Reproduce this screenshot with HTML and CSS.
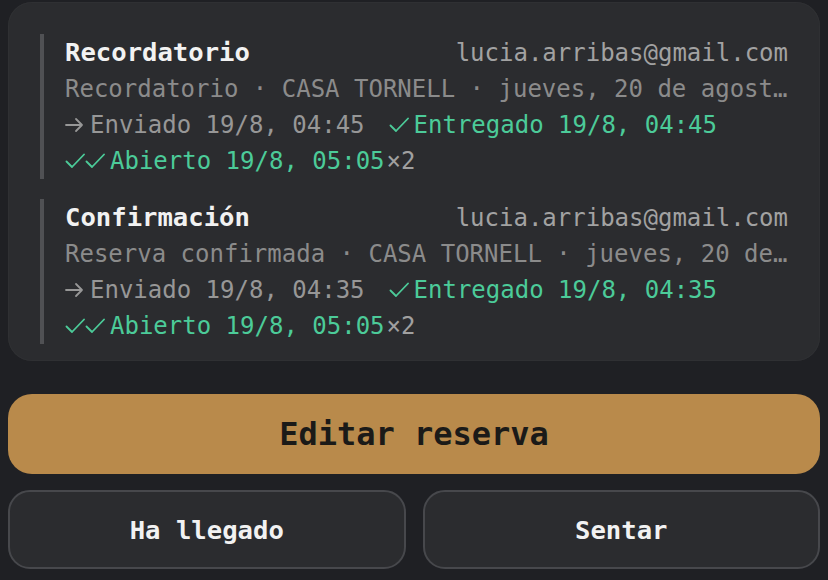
FILE: index.html
```html
<!DOCTYPE html>
<html lang="es">
<head>
<meta charset="utf-8">
<link rel="stylesheet" href="styles.css">
</head>
<body>
<div class="page">
  <section class="card">
    <div class="msg">
      <div class="msg-head">
        <span class="msg-title">Recordatorio</span>
        <span class="msg-email">lucia.arribas@gmail.com</span>
      </div>
      <div class="msg-sub">Recordatorio · CASA TORNELL · jueves, 20 de agosto de 2020, 21:00</div>
      <div class="msg-status">
        <span class="st st-sent"><svg class="ic" viewBox="0 0 20 16"><path d="M1 8H17M11 2L17 8L11 14"/></svg><span>Enviado 19/8, 04:45</span></span>
        <span class="st st-ok"><svg class="ic" viewBox="0 0 20 16"><path d="M1.5 8.5L7 14L19 1.5"/></svg><span>Entregado 19/8, 04:45</span></span>
        <span class="st st-ok"><svg class="ic ic2" viewBox="0 0 40 16"><path d="M1.5 8.5L7 14L19 1.5M21.5 8.5L27 14L39 1.5"/></svg><span>Abierto 19/8, 05:05<span class="times">×2</span></span></span>
      </div>
    </div>
    <div class="msg">
      <div class="msg-head">
        <span class="msg-title">Confirmación</span>
        <span class="msg-email">lucia.arribas@gmail.com</span>
      </div>
      <div class="msg-sub">Reserva confirmada · CASA TORNELL · jueves, 20 de agosto de 2020, 21:00</div>
      <div class="msg-status">
        <span class="st st-sent"><svg class="ic" viewBox="0 0 20 16"><path d="M1 8H17M11 2L17 8L11 14"/></svg><span>Enviado 19/8, 04:35</span></span>
        <span class="st st-ok"><svg class="ic" viewBox="0 0 20 16"><path d="M1.5 8.5L7 14L19 1.5"/></svg><span>Entregado 19/8, 04:35</span></span>
        <span class="st st-ok"><svg class="ic ic2" viewBox="0 0 40 16"><path d="M1.5 8.5L7 14L19 1.5M21.5 8.5L27 14L39 1.5"/></svg><span>Abierto 19/8, 05:05<span class="times">×2</span></span></span>
      </div>
    </div>
  </section>
  <button class="btn-primary">Editar reserva</button>
  <div class="btn-row">
    <button class="btn-secondary">Ha llegado</button>
    <button class="btn-secondary">Sentar</button>
  </div>
</div>
</body>
</html>
```
FILE: styles.css
```css
html, body {
  margin: 0;
  padding: 0;
  background: #1f2024;
}
body {
  font-family: "DejaVu Sans Mono", "Liberation Mono", monospace;
  color: #f0f0f0;
}
.page {
  padding: 2px 8px 0 8px;
  display: flex;
  flex-direction: column;
}
.card {
  background: #2b2c2f;
  border-radius: 24px;
  padding: 32px 32px 17px 32px;
  display: flex;
  flex-direction: column;
  gap: 20px;
  box-shadow: inset 0 0 0 1px #2f3033;
}
.msg {
  border-left: 4px solid #505154;
  padding-left: 21px;
  line-height: 36px;
  min-width: 0;
}
.msg-head {
  display: flex;
  justify-content: space-between;
  align-items: baseline;
}
.msg-title {
  font-size: 25.6px;
  font-weight: bold;
  color: #f2f2f2;
}
.msg-email {
  font-size: 24px;
  color: #a2a2a2;
}
.msg-sub {
  font-size: 24px;
  color: #8b8b8b;
  white-space: nowrap;
  overflow: hidden;
  text-overflow: ellipsis;
}
.msg-status {
  display: flex;
  flex-wrap: wrap;
  column-gap: 24px;
  font-size: 24px;
}
.st {
  display: inline-flex;
  align-items: center;
  gap: 5px;
  white-space: nowrap;
}
.st-sent {
  color: #979797;
}
.st-ok {
  color: #4ccb99;
}
.ic {
  width: 20px;
  height: 16px;
  fill: none;
  stroke: currentColor;
  stroke-width: 1.8;
  stroke-linecap: round;
  stroke-linejoin: round;
}
.ic2 {
  width: 40px;
}
.times {
  color: #a0a0a0;
  margin-left: 2px;
}
.btn-primary {
  margin-top: 33px;
  height: 80px;
  border: none;
  border-radius: 24px;
  background: #b98a4b;
  color: #1b1a18;
  font-family: inherit;
  font-size: 32px;
  font-weight: bold;
}
.btn-row {
  margin-top: 16px;
  display: grid;
  grid-template-columns: 1fr 1fr;
  gap: 17px;
}
.btn-secondary {
  height: 79px;
  border: 2px solid #47484c;
  border-radius: 22px;
  background: #2b2c2f;
  color: #f2f2f2;
  font-family: inherit;
  font-size: 25.6px;
  font-weight: bold;
}
```
